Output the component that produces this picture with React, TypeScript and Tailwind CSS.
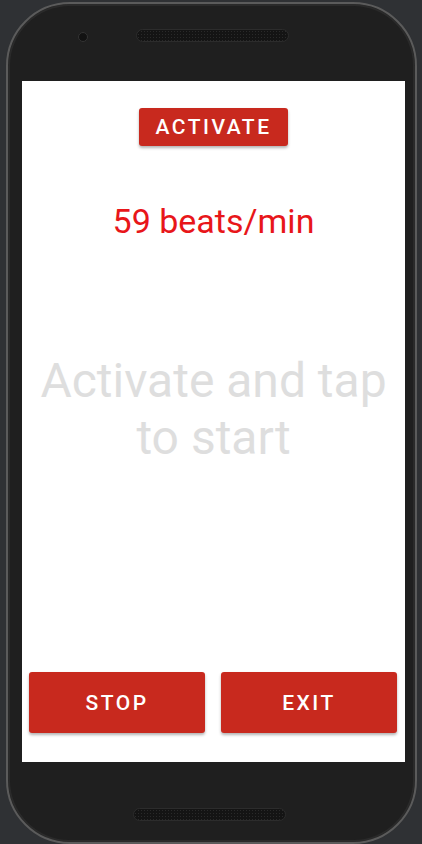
import { FC, ReactNode } from "react";

interface RedButtonProps {
  children: ReactNode;
  className?: string;
}

// flat material style button
const RedButton: FC<RedButtonProps> = ({ children, className = "" }) => (
  <button
    className={`flex items-center justify-center rounded-[3px] bg-[#c8291e] pt-[2px] font-medium uppercase text-white shadow-[0_2px_3px_rgba(0,0,0,0.3)] ${className}`}
  >
    {children}
  </button>
);

// speaker grille on the phone body
const Speaker: FC = () => (
  <div className="h-[13px] w-[153px] rounded-full border border-[#2c2c2c] bg-[#141414] bg-[radial-gradient(#2a2a2a_0.8px,transparent_0.9px)] bg-[length:3px_3px]" />
);

const App: FC = () => {
  return (
    <div className="h-[844px] w-[422px] overflow-hidden bg-[#2f3134] pl-[6px] pt-[2px] font-['Roboto',sans-serif]">
      <div className="flex h-[842px] w-[411px] flex-col rounded-[64px] border-2 border-[#5b5b5b] bg-[#1f1f1f] shadow-[inset_0_0_0_2px_#2a2a2a]">
        {/* top bezel */}
        <div className="flex h-[77px] items-start pl-[70px] pt-[25px]">
          <div className="mt-[3px] h-[10px] w-[10px] rounded-full border border-[#333] bg-[#121212]" />
          <div className="ml-[48px]">
            <Speaker />
          </div>
        </div>

        {/* screen */}
        <div className="ml-[14px] flex h-[681px] w-[383px] flex-col items-center bg-white">
          <RedButton className="mt-[27px] h-[38px] w-[149px] text-[21px] tracking-[2.5px]">
            Activate
          </RedButton>

          <p className="mt-[55px] text-[34px] leading-[40px] text-[#e8161a]">
            59 beats/min
          </p>

          <p className="mt-[111px] text-center text-[48px] leading-[57px] text-[#dedede]">
            Activate and tap
            <br />
            to start
          </p>

          <div className="mt-auto mb-[29px] flex w-full gap-[16px] pl-[7px] pr-[8px]">
            <RedButton className="h-[61px] flex-1 text-[21px] tracking-[2.5px]">Stop</RedButton>
            <RedButton className="h-[61px] flex-1 text-[21px] tracking-[2.5px]">Exit</RedButton>
          </div>
        </div>

        {/* bottom bezel */}
        <div className="flex justify-center pr-[4px] pt-[46px]">
          <Speaker />
        </div>
      </div>
    </div>
  );
};

export default App;
